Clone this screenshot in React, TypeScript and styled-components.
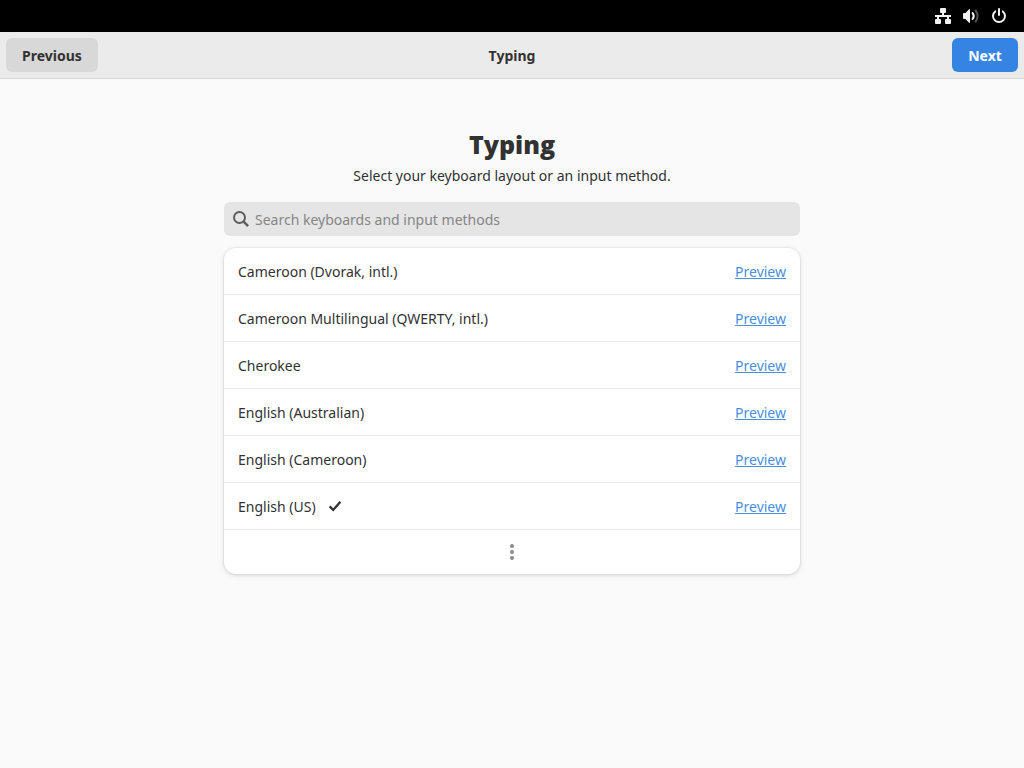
import React, { useState } from "react";
import styled, { createGlobalStyle } from "styled-components";

const GlobalStyle = createGlobalStyle`
  * { box-sizing: border-box; }
  body {
    margin: 0;
    background: #fafafa;
    color: #323232;
    font-family: "Noto Sans", "Open Sans", sans-serif;
    font-size: 14px;
    line-height: 20px;
  }
  button, input { font: inherit; color: inherit; }
`;

const TopBar = styled.div`
  display: flex;
  align-items: center;
  justify-content: flex-end;
  gap: 12px;
  height: 32px;
  padding: 0 17px;
  background: #000;
  color: #f2f2f2;
`;

const Icon = styled.svg`
  display: block;
  flex: none;
  width: 16px;
  height: 16px;
`;

const HeaderBar = styled.header`
  display: grid;
  grid-template-columns: 1fr auto 1fr;
  align-items: center;
  height: 47px;
  padding: 0 6px;
  background: #ebebeb;
  border-bottom: 1px solid #d8d8d8;
`;

const WindowTitle = styled.span`
  padding-top: 2px;
  font-weight: 700;
`;

const NavButton = styled.button<{ $suggested?: boolean }>`
  justify-self: ${(p) => (p.$suggested ? "end" : "start")};
  min-width: ${(p) => (p.$suggested ? "66px" : "92px")};
  height: 34px;
  padding: 2px 16px 0;
  border: 0;
  border-radius: 6px;
  background: ${(p) => (p.$suggested ? "#3584e4" : "#d8d8d8")};
  color: ${(p) => (p.$suggested ? "#fff" : "#323232")};
  font-weight: 700;
`;

const Page = styled.main`
  display: flex;
  flex-direction: column;
  align-items: center;
  width: 100%;
  max-width: 600px;
  margin: 0 auto;
  padding: 47px 12px 24px;
`;

const Heading = styled.h1`
  margin: 0;
  font-family: "Open Sans", "Noto Sans", sans-serif;
  font-size: 25px;
  line-height: 36px;
  font-weight: 800;
`;

const Description = styled.p`
  margin: 4px 0 16px;
  text-align: center;
`;

const SearchBox = styled.label`
  display: flex;
  align-items: center;
  gap: 6px;
  width: 100%;
  height: 34px;
  padding: 0 9px;
  border-radius: 6px;
  background: #e5e5e5;
  color: #5c5c5c;
`;

const SearchInput = styled.input`
  flex: 1;
  min-width: 0;
  padding: 2px 0 0;
  border: 0;
  outline: 0;
  background: transparent;
  color: #323232;
  &::placeholder { color: #868686; opacity: 1; }
`;

const LayoutList = styled.ul`
  width: 100%;
  margin: 12px 0 0;
  padding: 0;
  list-style: none;
  border-radius: 12px;
  background: #fff;
  box-shadow: 0 0 0 1px rgba(0, 0, 0, 0.03), 0 1px 3px 1px rgba(0, 0, 0, 0.07),
    0 2px 6px 2px rgba(0, 0, 0, 0.03);
`;

const LayoutRow = styled.li`
  display: flex;
  align-items: center;
  gap: 11px;
  height: 47px;
  padding: 2px 14px 0;
  border-bottom: 1px solid #ebebeb;
`;

const PreviewLink = styled.a`
  margin-left: auto;
  color: #4a8fdf;
`;

const MoreRow = styled.li`
  display: flex;
`;

const MoreButton = styled.button`
  display: flex;
  flex: 1;
  align-items: center;
  justify-content: center;
  height: 44px;
  padding: 0;
  border: 0;
  border-radius: 0 0 12px 12px;
  background: transparent;
  color: #8c8c8c;
`;

const layouts = [
  "Cameroon (Dvorak, intl.)",
  "Cameroon Multilingual (QWERTY, intl.)",
  "Cherokee",
  "English (Australian)",
  "English (Cameroon)",
  "English (US)",
];

const NetworkIcon = () => (
  <Icon viewBox="0 0 16 16" fill="currentColor" role="img" aria-label="Wired network">
    <rect x="5" y="0" width="6" height="5" rx="1" />
    <rect x="7" y="4" width="2" height="5" />
    <rect x="0" y="7" width="16" height="2" />
    <rect x="2" y="8" width="2" height="4" />
    <rect x="12" y="8" width="2" height="4" />
    <rect x="0" y="11" width="6" height="5" rx="1" />
    <rect x="10" y="11" width="6" height="5" rx="1" />
  </Icon>
);

const VolumeIcon = () => (
  <Icon viewBox="0 0 16 16" fill="none" stroke="currentColor" role="img" aria-label="Volume">
    <path d="M1 5h1.5L6 1.2h1v13.6H6L2.5 11H1a1 1 0 0 1-1-1V6a1 1 0 0 1 1-1z" fill="currentColor" stroke="none" />
    <path d="M9.6 5a5 5 0 0 1 0 6" strokeWidth="2" strokeLinecap="round" />
    <path d="M12.6 2.5a8.6 8.6 0 0 1 0 11" strokeWidth="2" strokeLinecap="round" opacity="0.35" />
  </Icon>
);

const PowerIcon = () => (
  <Icon
    viewBox="0 0 16 16"
    fill="none"
    stroke="currentColor"
    strokeWidth="2"
    strokeLinecap="round"
    role="img"
    aria-label="Power"
  >
    <path d="M8 1v6" />
    <path d="M4.2 3.4a6 6 0 1 0 7.6 0" />
  </Icon>
);

const SearchIcon = () => (
  <Icon viewBox="0 0 16 16" fill="none" stroke="currentColor" aria-hidden="true">
    <circle cx="6.5" cy="6.5" r="5.5" strokeWidth="2" />
    <path d="M10.7 10.7l4.4 4.4" strokeWidth="2.4" />
  </Icon>
);

const CheckIcon = () => (
  <Icon viewBox="0 0 16 16" fill="none" stroke="currentColor" role="img" aria-label="Selected">
    <path d="M2.6 7.4l3.6 3.5 7.2-8.2" strokeWidth="2.3" />
  </Icon>
);

const MoreIcon = () => (
  <Icon viewBox="0 0 16 16" fill="currentColor" aria-hidden="true">
    <circle cx="8" cy="2" r="2" />
    <circle cx="8" cy="8" r="2" />
    <circle cx="8" cy="14" r="2" />
  </Icon>
);

export default function App() {
  const [query, setQuery] = useState("");

  return (
    <>
      <GlobalStyle />
      <TopBar>
        <NetworkIcon />
        <VolumeIcon />
        <PowerIcon />
      </TopBar>
      <HeaderBar>
        <NavButton type="button">Previous</NavButton>
        <WindowTitle>Typing</WindowTitle>
        <NavButton type="button" $suggested>
          Next
        </NavButton>
      </HeaderBar>
      <Page>
        <Heading>Typing</Heading>
        <Description>Select your keyboard layout or an input method.</Description>
        <SearchBox>
          <SearchIcon />
          <SearchInput
            type="text"
            aria-label="Search keyboards and input methods"
            placeholder="Search keyboards and input methods"
            value={query}
            onChange={(e) => setQuery(e.target.value)}
          />
        </SearchBox>
        <LayoutList>
          {layouts.map((name) => (
            <LayoutRow key={name}>
              <span>{name}</span>
              {name === "English (US)" && <CheckIcon />}
              <PreviewLink href="#preview">Preview</PreviewLink>
            </LayoutRow>
          ))}
          <MoreRow>
            <MoreButton type="button" aria-label="More">
              <MoreIcon />
            </MoreButton>
          </MoreRow>
        </LayoutList>
      </Page>
    </>
  );
}
